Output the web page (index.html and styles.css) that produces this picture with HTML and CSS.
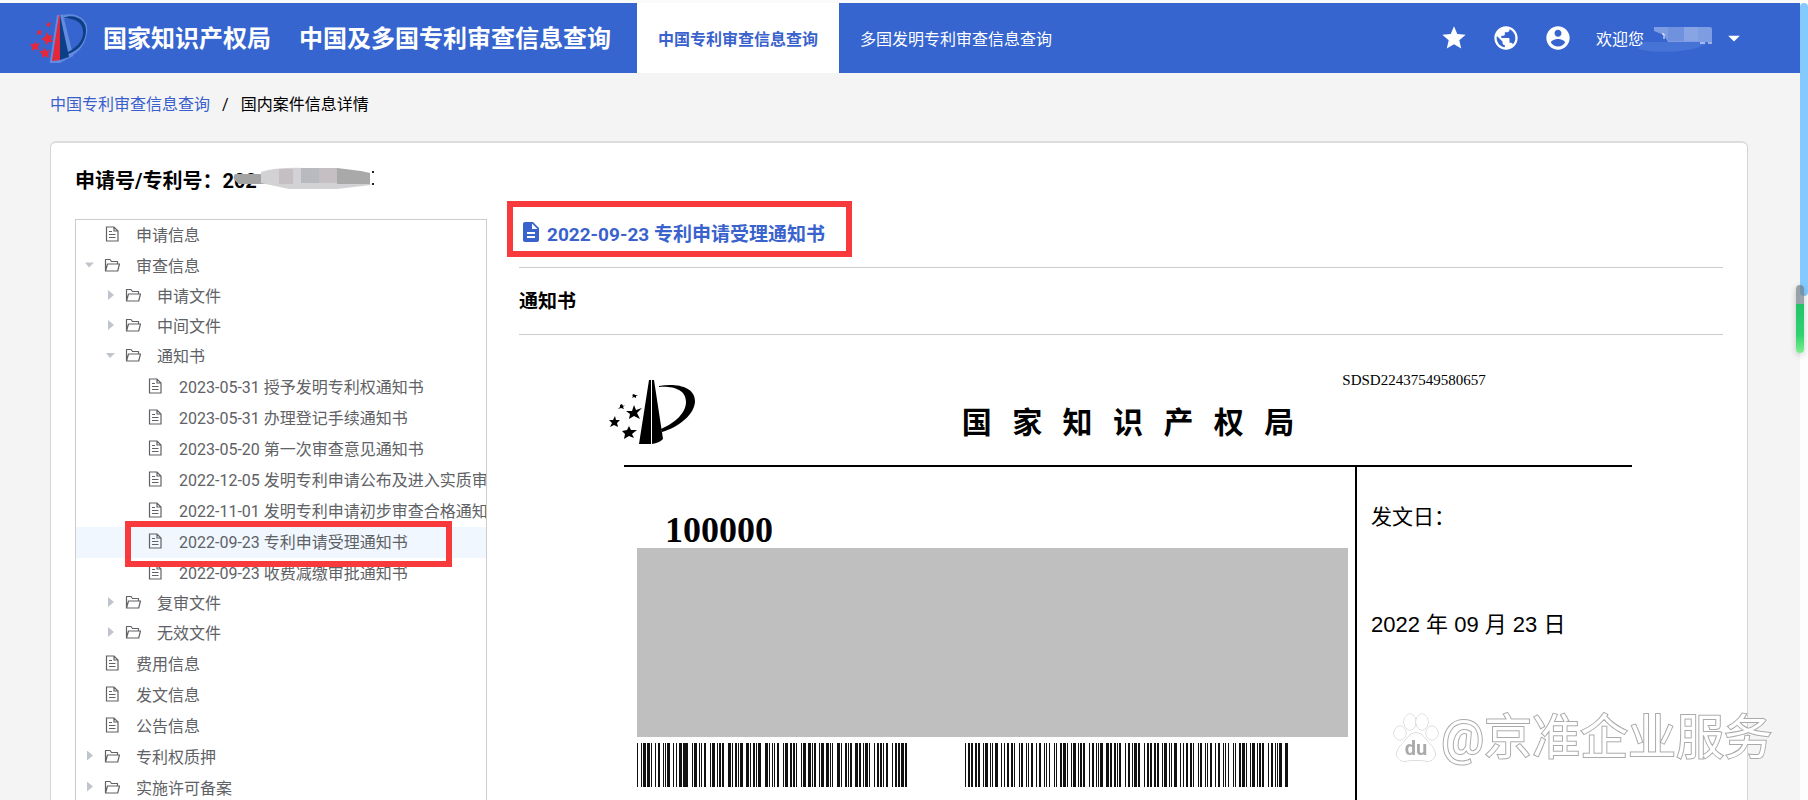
FILE: index.html
```html
<!DOCTYPE html>
<html lang="zh-CN">
<head>
  <meta charset="UTF-8">
  <meta name="viewport" content="width=device-width, initial-scale=1">
  <title>中国及多国专利审查信息查询</title>
  <link rel="stylesheet" href="styles.css">
</head>
<body>
<!-- shared icons -->
<svg class="sprite" aria-hidden="true">
  <symbol id="icon-doc" viewBox="0 0 16 16">
    <path d="M2.500 1h7.500l4 4v10h-11.500zM10 1v4h4M5 5.500h3M5 8.500h6.500M5 11.500h6.500" fill="none" stroke="currentColor" stroke-width="1.200"/>
  </symbol>
  <symbol id="icon-folder" viewBox="0 0 16 16">
    <path d="M1.500 14V2.500h4.500l1.500 2h6V7M1.500 14L3.500 7h12l-1.800 7z" fill="none" stroke="currentColor" stroke-width="1.200" stroke-linejoin="round"/>
  </symbol>
</svg>

<div class="page">
  <header class="header">
    <svg class="logo" viewBox="0 0 60 50" aria-hidden="true">
      <g class="logo-glow">
        <path d="M29 2L22 48h7zM31 2l10 40-10 5z"/>
        <path d="M33 4c14-3 24 4 22 16-2 13-10 19-16 22"/>
      </g>
      <path class="logo-red" d="M29 2l1 0v45l-8 1z"/>
      <path class="logo-navy" d="M30 2l9 42-9 3z"/>
      <path class="logo-navy" d="M33 5c12-5 24 2 23 14-1 12-9 19-18 22v-2c8-4 14-10 15-19 1-10-8-15-20-15z"/>
      <path class="logo-red" d="M17 19l2 4 4-1-2 4 2 3-4 0-3 3-1-4-4-2 4-2zM4 28l2 3 4-1-2 4 1 3-4-1-3 2v-4l-2-3 4 0zM14 34l2 4 4-1-2 4 1 4-4-2-3 2 0-4-3-3 4 0zM8 17l2 1 2-1-1 3 1 2-3-1-2 1 0-2zM18 9l1 1 2 0-1 2 0 2-2-1-2 0 1-2z"/>
    </svg>
    <h1 class="brand">国家知识产权局</h1>
    <p class="brand product">中国及多国专利审查信息查询</p>
    <nav class="tabs">
      <a class="tab active" href="#cn">中国专利审查信息查询</a>
      <a class="tab" href="#multi">多国发明专利审查信息查询</a>
    </nav>
    <div class="tools">
      <button class="tool" type="button" aria-label="收藏">
        <svg viewBox="0 0 24 24"><path d="M12 17.270L18.180 21l-1.640-7.030L22 9.240l-7.190-.61L12 2 9.190 8.630 2 9.240l5.460 4.730L5.820 21z"/></svg>
      </button>
      <button class="tool" type="button" aria-label="语言">
        <svg viewBox="0 0 24 24"><path d="M12 2C6.480 2 2 6.480 2 12s4.480 10 10 10 10-4.480 10-10S17.520 2 12 2zm-1 17.930c-3.950-.49-7-3.850-7-7.930 0-.62.08-1.210.21-1.790L9 15v1c0 1.100.9 2 2 2v1.930zm6.900-2.540c-.26-.81-1-1.390-1.900-1.390h-1v-3c0-.55-.45-1-1-1H8v-2h2c.55 0 1-.45 1-1V7h2c1.100 0 2-.9 2-2v-.41c2.930 1.190 5 4.060 5 7.410 0 2.080-.8 3.970-2.100 5.390z"/></svg>
      </button>
      <button class="tool" type="button" aria-label="账户">
        <svg viewBox="0 0 24 24"><path d="M12 2C6.480 2 2 6.480 2 12s4.480 10 10 10 10-4.480 10-10S17.520 2 12 2zm0 3c1.660 0 3 1.340 3 3s-1.340 3-3 3-3-1.340-3-3 1.340-3 3-3zm0 14.200c-2.500 0-4.710-1.280-6-3.220.03-1.990 4-3.080 6-3.080 1.990 0 5.970 1.090 6 3.080-1.290 1.940-3.500 3.220-6 3.220z"/></svg>
      </button>
      <button class="user" type="button">
        欢迎您
        <svg class="user-mask" viewBox="0 0 68 28" aria-hidden="true">
          <path d="M0 18h64c-8 9-46 13-70 7z" fill="#4673d6"/>
          <path d="M10 3h56q2 0 2 2v13H24l-4-7-10-4z" fill="#7d9ce2"/>
          <path d="M24 3h16v14H24z" fill="#7091de"/>
          <path d="M40 3h14v14H40z" fill="#89a4e4"/>
          <path d="M18 10h2v5M56 19h5M64 19h4" fill="none" stroke="#fff"/>
        </svg>
        <svg class="caret" viewBox="0 0 24 24"><path d="M7 10l5 5 5-5z"/></svg>
      </button>
    </div>
  </header>

  <nav class="breadcrumb">
    <a href="#cn">中国专利审查信息查询</a>
    <span>/</span>
    <span>国内案件信息详情</span>
  </nav>

  <main class="panel">
    <h2 class="case-no">申请号/专利号：202
      <svg class="case-mask" viewBox="0 0 130 24" aria-hidden="true">
        <path d="M-22 7h34v10h-30q-8-5-4-10z" fill="#a3a3a3"/>
        <path d="M4 5q16-5 44-4h24l34 5 8 12-34 4H32L4 16z" fill="#d2d2d4"/>
        <path d="M22 2h14v15H22zM62 1h18v15H62z" fill="#c5bec2"/>
        <path d="M44 1h18v15H44z" fill="#b9babf"/>
        <path d="M80 1l24 3 9 2v11H80z" fill="#a9a9aa"/>
        <path d="M115 5h2M115 17h2" fill="none" stroke="#222" stroke-width="2"/>
      </svg>
    </h2>
    <div class="columns">
      <aside class="tree">
        <ul class="level-1">
          <li><a class="node" href="#"><i class="arrow"></i><svg><use href="#icon-doc"/></svg>申请信息</a></li>
          <li>
            <a class="node" href="#"><i class="arrow open"></i><svg><use href="#icon-folder"/></svg>审查信息</a>
            <ul class="level-2">
              <li><a class="node" href="#"><i class="arrow closed"></i><svg><use href="#icon-folder"/></svg>申请文件</a></li>
              <li><a class="node" href="#"><i class="arrow closed"></i><svg><use href="#icon-folder"/></svg>中间文件</a></li>
              <li>
                <a class="node" href="#"><i class="arrow open"></i><svg><use href="#icon-folder"/></svg>通知书</a>
                <ul class="level-3">
                  <li><a class="node" href="#"><i class="arrow"></i><svg><use href="#icon-doc"/></svg>2023-05-31 授予发明专利权通知书</a></li>
                  <li><a class="node" href="#"><i class="arrow"></i><svg><use href="#icon-doc"/></svg>2023-05-31 办理登记手续通知书</a></li>
                  <li><a class="node" href="#"><i class="arrow"></i><svg><use href="#icon-doc"/></svg>2023-05-20 第一次审查意见通知书</a></li>
                  <li><a class="node" href="#"><i class="arrow"></i><svg><use href="#icon-doc"/></svg>2022-12-05 发明专利申请公布及进入实质审查</a></li>
                  <li><a class="node" href="#"><i class="arrow"></i><svg><use href="#icon-doc"/></svg>2022-11-01 发明专利申请初步审查合格通知</a></li>
                  <li class="marked"><a class="node current" href="#"><i class="arrow"></i><svg><use href="#icon-doc"/></svg>2022-09-23 专利申请受理通知书</a></li>
                  <li><a class="node" href="#"><i class="arrow"></i><svg><use href="#icon-doc"/></svg>2022-09-23 收费减缴审批通知书</a></li>
                </ul>
              </li>
              <li><a class="node" href="#"><i class="arrow closed"></i><svg><use href="#icon-folder"/></svg>复审文件</a></li>
              <li><a class="node" href="#"><i class="arrow closed"></i><svg><use href="#icon-folder"/></svg>无效文件</a></li>
            </ul>
          </li>
          <li><a class="node" href="#"><i class="arrow"></i><svg><use href="#icon-doc"/></svg>费用信息</a></li>
          <li><a class="node" href="#"><i class="arrow"></i><svg><use href="#icon-doc"/></svg>发文信息</a></li>
          <li><a class="node" href="#"><i class="arrow"></i><svg><use href="#icon-doc"/></svg>公告信息</a></li>
          <li><a class="node" href="#"><i class="arrow closed"></i><svg><use href="#icon-folder"/></svg>专利权质押</a></li>
          <li><a class="node" href="#"><i class="arrow closed"></i><svg><use href="#icon-folder"/></svg>实施许可备案</a></li>
        </ul>
      </aside>

      <section class="detail">
        <h3 class="detail-title">
          <svg viewBox="0 0 24 24" aria-hidden="true"><path d="M14 2H6c-1.100 0-1.990.9-1.990 2L4 20c0 1.100.89 2 1.990 2H18c1.100 0 2-.9 2-2V8l-6-6zm2 16H8v-2h8v2zm0-4H8v-2h8v2zm-3-5V3.500L18.500 9H13z"/></svg>
          2022-09-23 专利申请受理通知书
        </h3>
        <h4 class="detail-sub">通知书</h4>

        <article class="notice">
          <header class="notice-head">
            <svg class="notice-logo" viewBox="0 0 86 64" aria-hidden="true">
              <path d="M40 0h2v64H30zM43 0h2l9 59c-3 3-6 4-11 5z"/>
              <path d="M50 6c16-3 36 0 36 15 0 13-16 26-33 31l-1-3c14-6 25-16 25-27 0-12-12-16-27-15z"/>
              <path d="M25 25l2 5 6-2-5 5 3 6-6-3-5 3 1-5-4-3h6zM6 36l1 4 4 0-3 3 1 4-4-2-4 2 2-4-3-3h4zM20 46l2 4 6 0-5 4 2 4-5-2-5 3 1-5-3-3 5-1zM13 24l1 2 2-1-2 2 1 2-3-1-3 1 2-2 0-2zM25 14l1 1 3 0-2 1 0 2-2-1-2 1 1-2-1-1z"/>
            </svg>
            <p class="notice-no">SDSD22437549580657</p>
            <h5 class="notice-org">国   家   知   识   产   权   局</h5>
          </header>
          <div class="notice-body">
            <div class="notice-address">
              <p class="postcode">100000</p>
              <div class="redacted"></div>
              <div class="barcodes">
                <svg width="270" height="44" viewBox="0 0 270 44" aria-hidden="true">
                  <line x1="0" y1="22" x2="270" y2="22" stroke-width="44" stroke-dasharray="1 3 1 1 3 1 3 1 1 3 1 2 2 3 1 1 1 1 3 3 1 2 1 2 3 1 5 4 1 1 3 2 1 1 1 2 2 4 1 1 3 2 1 1 2 1 2 4 3 1 1 2 2 1 1 1 3 3 3 1 1 2 2 1 1 1 3 4 3 1 1 2 1 1 1 2 2 4 1 1 3 2 2 1 2 1 1 4 1 1 3 2 3 1 1 1 2 3 1 1 3 2 3 1 1 1 1 4 3 1 1 3 2 1 1 1 2 3 3 1 2 2 1 1 3 1 1 4 1 2 2 1 2 1 1 2 2 4 1 2 2 1 2 1 3 1 2 20"/>
                </svg>
                <svg width="324" height="44" viewBox="0 0 324 44" aria-hidden="true">
                  <line x1="0" y1="22" x2="324" y2="22" stroke-width="44" stroke-dasharray="1 2 2 1 2 2 2 1 2 3 1 1 3 2 1 1 1 2 3 3 1 2 1 2 2 2 2 1 1 4 1 1 2 3 1 1 1 2 2 3 1 2 2 3 1 1 1 2 1 4 1 1 1 3 2 1 3 1 1 3 1 1 3 2 1 1 2 1 2 4 1 2 2 2 1 1 1 1 3 3 3 1 2 2 2 1 1 1 2 4 1 2 2 2 1 1 3 1 2 4"/>
                </svg>
              </div>
            </div>
            <div class="notice-date">
              <p class="date-label">发文日：</p>
              <p class="date-value">2022 年 09 月 23 日</p>
            </div>
          </div>
        </article>
      </section>
    </div>
  </main>
</div>

<div class="scroll-track"></div>
<div class="scroll-badge"></div>

<div class="watermark">
  <svg viewBox="0 0 46 50" aria-hidden="true">
    <ellipse cx="17" cy="9" rx="6" ry="8"/>
    <ellipse cx="29" cy="9" rx="6" ry="8"/>
    <ellipse cx="7" cy="20" rx="6" ry="7"/>
    <ellipse cx="39" cy="20" rx="6" ry="7"/>
    <path d="M23 20c7 0 9 6 14 11 8 8 6 17-2 17-5 0-7-1-12-1s-7 1-12 1c-8 0-10-9-2-17 5-5 7-11 14-11z"/>
    <text x="23" y="42" text-anchor="middle">du</text>
  </svg>
  <span>@京准企业服务</span>
</div>
</body>
</html>
```
FILE: styles.css
```css
* { box-sizing: border-box; }

body {
  margin: 0;
  height: 100vh;
  overflow: hidden;
  background-color: #fdfdfd;
  font-family: Roboto, "Noto Sans CJK SC", sans-serif;
  font-size: 16px;
  color: #000;
}

h1, h2, h3, h4, h5, p, ul {
  margin: 0;
  padding: 0;
}

ul { list-style: none; }
a { text-decoration: none; }

button {
  border: none;
  background: none;
  padding: 0;
  color: inherit;
  font: inherit;
  cursor: pointer;
}

.sprite {
  position: absolute;
  width: 0;
  height: 0;
}

.page {
  height: 100vh;
  margin-right: 8px;
  padding-top: 3px;
  overflow: hidden;
  background: linear-gradient(#fafafa 3px, #f4f4f4 3px);
}

/* header */
.header {
  display: flex;
  align-items: center;
  height: 70px;
  padding: 0 52px 0 30px;
  background-color: #3665d0;
  color: #fff;
}

.logo {
  width: 60px;
  height: 50px;
  margin-right: 13px;
}

.logo-glow {
  fill: none;
  stroke: #8fb0ec;
  stroke-width: 4;
  opacity: 0.5;
}

.logo-red { fill: #e5273c; }
.logo-navy { fill: #0d3f86; }

.brand {
  padding-top: 2px;
  font-size: 24px;
  font-weight: bold;
  line-height: 36px;
  white-space: nowrap;
}

.product { margin-left: 28px; }

.tabs {
  display: flex;
  align-self: stretch;
  margin-left: 26px;
}

.tab {
  display: flex;
  align-items: center;
  padding: 0 21px;
  color: #fff;
  white-space: nowrap;
}

.tab.active {
  background-color: #fff;
  color: #3a62cc;
  font-weight: bold;
}

.tools {
  display: flex;
  align-items: center;
  gap: 24px;
  margin-left: auto;
}

.tool { height: 28px; }

.tool svg,
.caret {
  display: block;
  width: 28px;
  height: 28px;
  fill: #fff;
}

.user {
  display: flex;
  align-items: center;
  white-space: nowrap;
}

.user-mask {
  width: 68px;
  height: 28px;
  margin-right: 8px;
  overflow: visible;
}

.breadcrumb {
  display: flex;
  gap: 12px;
  padding: 19px 50px 24px;
  line-height: 25px;
}

.breadcrumb a { color: #3a5fcd; }

/* content panel */
.panel {
  margin: 0 52px 0 50px;
  padding: 20px 24px;
  border: 1px solid #d4d4d4;
  border-top: 2px solid #dcdcdc;
  border-radius: 6px;
  background-color: #fff;
}

.case-no {
  display: flex;
  align-items: center;
  height: 36px;
  padding-bottom: 4px;
  font-size: 20px;
  font-weight: bold;
}

.case-mask {
  width: 130px;
  height: 24px;
  overflow: visible;
}

.columns {
  display: flex;
  align-items: flex-start;
  gap: 32px;
}

/* tree */
.tree {
  flex: 0 0 25%;
  min-width: 0;
  margin-top: 20px;
  border: 1px solid #ccc;
  color: #606266;
}

.node {
  display: flex;
  align-items: center;
  height: 31px;
  padding: 0 0 4px 5px;
  color: #606266;
  white-space: nowrap;
  overflow: hidden;
}

.node svg {
  flex: none;
  width: 16px;
  height: 16px;
  margin: 0 16px 0 7px;
}

.level-2 .node {
  height: 30px;
  padding-left: 26px;
}

.level-3 .node {
  height: 31px;
  padding-left: 48px;
}

.node.current { background-color: #f0f7ff; }

.arrow {
  flex: none;
  width: 16px;
  height: 10px;
}

.arrow.open,
.arrow.closed {
  background-color: #c0c4cc;
}

.arrow.open { clip-path: polygon(4px 3px, 13px 3px, 8px 8px); }
.arrow.closed { clip-path: polygon(6px 0, 12px 5px, 6px 10px); }

/* red frame drawn round the selected notice */
.marked { position: relative; }

.marked::after {
  content: "";
  position: absolute;
  top: -6px;
  right: 34px;
  bottom: -9px;
  left: 49px;
  z-index: 1;
  border: 6px solid #f93a3d;
}

/* detail */
.detail {
  flex: 1;
  min-width: 0;
}

.detail-title {
  position: relative;
  display: flex;
  align-items: center;
  gap: 4px;
  height: 69px;
  padding-bottom: 2px;
  border-bottom: 1px solid #ccc;
  font-size: 19px;
  font-weight: bold;
  color: #3a62cc;
}

.detail-title svg {
  width: 24px;
  height: 24px;
  fill: #3a62cc;
}

.detail-title::after {
  content: "";
  position: absolute;
  top: 2px;
  bottom: 10px;
  left: -12px;
  width: 333px;
  border: 6px solid #f93a3d;
}

.detail-sub {
  height: 67px;
  border-bottom: 1px solid #ccc;
  font-size: 19px;
  line-height: 68px;
}

/* notice page */
.notice { padding: 0 91px 0 105px; }

.notice-head {
  display: grid;
  grid-template-columns: 1fr auto 1fr;
  grid-template-rows: 24px 44px;
  row-gap: 8px;
  padding: 33px 0 21px;
  border-bottom: 2px solid #000;
}

.notice-logo {
  grid-row: 1 / 3;
  align-self: end;
  width: 86px;
  height: 64px;
  margin-left: -15px;
}

.notice-no {
  grid-column: 3;
  padding-left: 48px;
  font-family: "Liberation Serif", serif;
  font-size: 15px;
  line-height: 24px;
}

.notice-org {
  grid-column: 2;
  grid-row: 2;
  font-family: "Noto Sans CJK SC", sans-serif;
  font-size: 30px;
  line-height: 40px;
  white-space: pre;
}

.notice-body {
  display: grid;
  grid-template-columns: 1fr 277px;
}

.notice-address { padding: 45px 7px 60px 13px; }

.postcode {
  padding-left: 28px;
  font-family: "Liberation Serif", serif;
  font-size: 36px;
  font-weight: bold;
  line-height: 36px;
}

.redacted {
  height: 189px;
  background-color: #bfbfbf;
}

.barcodes {
  display: flex;
  gap: 58px;
  padding-top: 6px;
}

.barcodes line { stroke: #111; }

.notice-date {
  padding: 34px 0 0 14px;
  border-left: 2px solid #000;
}

.date-label {
  font-family: "Noto Sans CJK SC", sans-serif;
  font-size: 21px;
  line-height: 28px;
}

.date-value {
  padding-top: 78px;
  font-family: "Liberation Sans", "Noto Sans CJK SC", sans-serif;
  font-size: 22px;
  line-height: 36px;
  white-space: nowrap;
}

/* window edge */
.scroll-track {
  position: fixed;
  top: 3px;
  right: 0;
  width: 8px;
  height: 293px;
  border-radius: 4px;
  background-color: #85caff;
}

.scroll-badge {
  position: fixed;
  top: 285px;
  right: 4px;
  width: 8px;
  height: 68px;
  border-radius: 4px;
  background: linear-gradient(rgba(110, 125, 135, 0.7) 19px, #22c268 19px, #2fd271 50px, #7cf08c);
  box-shadow: 0 2px 6px rgba(0, 0, 0, 0.2);
}

.watermark {
  position: fixed;
  right: 36px;
  bottom: 30px;
  z-index: 2;
  display: flex;
  align-items: center;
  gap: 2px;
  font-size: 48px;
  line-height: 64px;
  color: #fff;
  white-space: nowrap;
  -webkit-text-stroke: 2px #aaa;
  paint-order: stroke fill;
}

.watermark svg {
  width: 46px;
  height: 50px;
  fill: #fff;
  stroke: #bbb;
}

.watermark text {
  fill: #aaa;
  stroke: none;
  font-size: 20px;
  font-weight: bold;
  -webkit-text-stroke: 0;
}
```
